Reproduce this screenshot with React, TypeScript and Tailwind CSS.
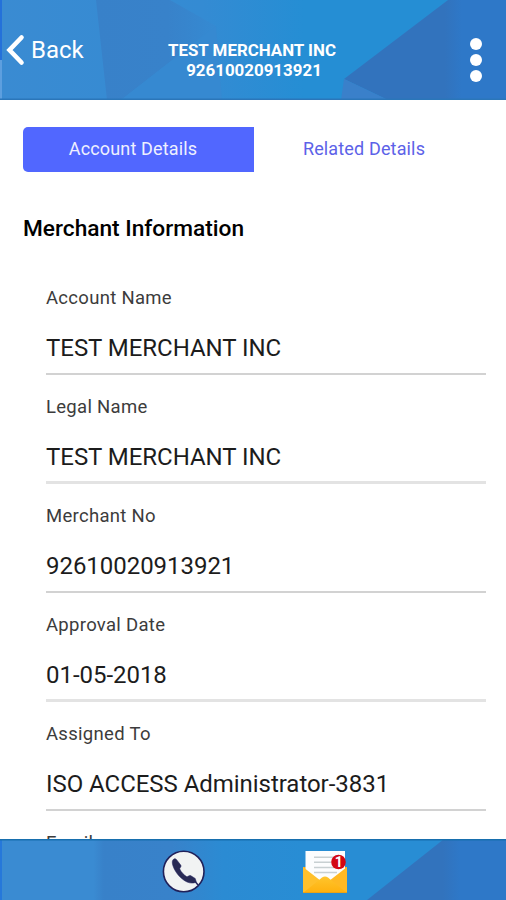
import { useState } from "react";
import { clsx } from "clsx";

type Tab = "account" | "related";

const fields = [
  { label: "Account Name",  value: "TEST MERCHANT INC" },
  { label: "Legal Name",    value: "TEST MERCHANT INC" },
  { label: "Merchant No",   value: "92610020913921" },
  { label: "Approval Date", value: "01-05-2018" },
  { label: "Assigned To",   value: "ISO ACCESS Administrator-3831" },
  { label: "Email",         value: "" },
];

function HeaderArt() {
  return (
    <svg className="absolute inset-0 h-full w-full" viewBox="0 0 506 100" preserveAspectRatio="none">
      <defs>
        <linearGradient id="headBase" x1="0" x2="1">
          <stop offset="0" stopColor="#3a8bd2" />
          <stop offset="0.4" stopColor="#348bd3" />
          <stop offset="0.6" stopColor="#258ed4" />
        </linearGradient>
        <linearGradient id="headFold" x1="0" x2="1">
          <stop offset="0" stopColor="#3881c9" />
          <stop offset="0.6" stopColor="#3882ca" />
          <stop offset="1" stopColor="#358ad2" />
        </linearGradient>
        <linearGradient id="headDark" gradientUnits="userSpaceOnUse" x1="445" x2="462" y1="0" y2="0">
          <stop offset="0" stopColor="#3273bd" />
          <stop offset="1" stopColor="#2e78c8" />
        </linearGradient>
      </defs>
      <rect width="506" height="100" fill="url(#headBase)" />
      <path d="M96 0H170L216 26L121 100H107Z" fill="url(#headFold)" />
      <path d="M216 26L222 100H121Z" fill="#3689d1" />
      <path d="M448 0H506V100H388L344 79Z" fill="url(#headDark)" />
      <path d="M344 79L388 100H341Z" fill="#3a80ca" />
      <path d="M0 0H2V60H0Z" fill="#2471da" />
      <path d="M0 60H2V100H0Z" fill="#5d9fdf" />
      <path d="M0 98.500H506V100H0Z" fill="#2b76b9" />
    </svg>
  );
}

function FooterArt() {
  return (
    <svg className="absolute inset-0 h-full w-full" viewBox="0 0 506 61" preserveAspectRatio="none">
      <defs>
        <linearGradient id="footBase" x1="0" x2="1">
          <stop offset="0" stopColor="#3a8bd2" />
          <stop offset="0.185" stopColor="#3a8bd2" />
          <stop offset="0.205" stopColor="#3881c9" />
          <stop offset="0.34" stopColor="#3882ca" />
          <stop offset="0.44" stopColor="#2b8bd3" />
          <stop offset="0.6" stopColor="#288dd4" />
        </linearGradient>
        <linearGradient id="footDark" gradientUnits="userSpaceOnUse" x1="443" x2="460" y1="0" y2="0">
          <stop offset="0" stopColor="#3273bd" />
          <stop offset="1" stopColor="#2e78c8" />
        </linearGradient>
      </defs>
      <rect width="506" height="61" fill="url(#footBase)" />
      <path d="M444 0H506V61H367Z" fill="url(#footDark)" />
      <path d="M0 0H2V61H0Z" fill="#2678da" />
      <path d="M0 0H506V1.500H0Z" fill="#176fae" />
    </svg>
  );
}

function PhoneIcon() {
  return (
    <svg width="44" height="44" viewBox="0 0 44 44">
      <circle cx="21.700" cy="21.500" r="20.300" fill="#f1f3f3" stroke="#20215a" strokeWidth="1.600" />
      <path
        d="M11.800 9C9.900 10.200 9.900 13 11 16C13.300 22.500 18.500 28.800 25 32C28 33.300 31 33.400 33.300 32.500L34.200 31.400L33.200 28.400L28.600 25.600C27.100 24.900 26.500 26.600 24.900 26.800C22 25.200 19 22 17.700 18.800C18.200 17.400 19.500 16.800 18.900 15.300L14.400 9.400C13.600 8.500 12.700 8.500 11.800 9Z"
        fill="#292a55"
        stroke="#20215a"
        strokeWidth="0.500"
      />
      <path d="M33.200 31.500L36 35" stroke="#20215a" strokeWidth="1.400" />
    </svg>
  );
}

function MailIcon() {
  return (
    <svg width="46" height="44" viewBox="0 0 46 44">
      <defs>
        <linearGradient id="flap" x1="0" y1="0" x2="0" y2="1">
          <stop offset="0" stopColor="#ffc52d" />
          <stop offset="1" stopColor="#ffb00d" />
        </linearGradient>
      </defs>
      <path d="M1 17H45V43H1Z" fill="#f6ad22" />
      <path d="M3.500 1H43V32H3.500Z" fill="#fcfdfe" />
      <path d="M12 7.200H31M12 12.300H29M12 17.400H33M12 22.500H35" stroke="#c8d0d2" strokeWidth="1.500" />
      <path d="M1 17L19 31L1 43Z" fill="#ffc02b" />
      <path d="M45 17L27 31L45 43Z" fill="#ffb923" />
      <path d="M1 43L17 30L20 27.500Q23 25.500 26 27.500L29 30L45 43Z" fill="url(#flap)" />
      <path d="M1 42.500H45" stroke="#eba316" strokeWidth="1" />
      <circle cx="36.500" cy="12" r="7.300" fill="#d30713" />
      <text x="36.700" y="17" textAnchor="middle" fontSize="14" fontWeight="700" fill="#fff" fontFamily="Roboto, sans-serif">1</text>
    </svg>
  );
}

export default function App() {
  const [tab, setTab] = useState<Tab>("account");

  return (
    <div className="flex h-[900px] w-[506px] flex-col overflow-hidden bg-white font-['Roboto',sans-serif]">
      <header className="relative h-[100px] shrink-0 overflow-hidden">
        <HeaderArt />
        <div className="relative flex h-full justify-between text-white">
          <button className="flex h-[100px] w-[120px] items-center pl-[6px]">
            <svg width="20" height="32" viewBox="0 0 20 32" fill="none" stroke="#fff" strokeWidth="4.600" strokeLinecap="round">
              <path d="M15.500 3.500L3.500 16L15.500 28.500" />
            </svg>
            <span className="ml-[5px] text-[24px] leading-[30px]">Back</span>
          </button>
          <div className="pt-[40px] text-center text-[16.900px] leading-[20px] font-bold">
            <p>TEST MERCHANT INC</p>
            <p className="pl-[4px]">92610020913921</p>
          </div>
          <button className="flex w-[122px] flex-col items-end gap-[4px] pt-[37.500px] pr-[24px]">
            <span className="size-[12px] rounded-full bg-white" />
            <span className="size-[12px] rounded-full bg-white" />
            <span className="size-[12px] rounded-full bg-white" />
          </button>
        </div>
      </header>

      <main className="min-h-0 flex-1 overflow-hidden pt-[27px]">
        <div className="ml-[23px] flex h-[45px] w-[451px] text-[18px]">
          {(["account", "related"] as Tab[]).map((t) => (
            <button
              key={t}
              onClick={() => setTab(t)}
              className={clsx(
                "pb-[2px] tracking-[0.150px]",
                t === "account" ? "w-[231px] rounded-l-[5px] pr-[11px]" : "w-[220px]",
                tab === t ? "bg-[#5167ff] text-[#eef0ff]" : "text-[#5c62e8]"
              )}
            >
              {t === "account" ? "Account Details" : "Related Details"}
            </button>
          ))}
        </div>

        <h2 className="mt-[42px] ml-[23px] text-[22.700px] leading-[30px] font-medium text-black">
          Merchant Information
        </h2>

        <div className="mt-[22px] mr-[20px] ml-[46px]">
          {fields.map((f, i) => (
            <div
              key={f.label}
              className={clsx(
                "h-[109px] pt-[20px]",
                i % 2 === 0 ? "border-b-2 border-[#d2d2d2]" : "border-b-3 border-[#e3e3e3]"
              )}
            >
              <p className="text-[18.500px] leading-[24px] tracking-[0.300px] text-[#3c3c3c]">{f.label}</p>
              <p className="mt-[23px] text-[24px] leading-[30px] tracking-[-0.040px] text-[#1c1c1c]">{f.value}</p>
            </div>
          ))}
        </div>
      </main>

      <footer className="relative h-[61px] shrink-0">
        <FooterArt />
        <div className="relative flex pt-[11px] pl-[162px]">
          <button><PhoneIcon /></button>
          <button className="ml-[96px]"><MailIcon /></button>
        </div>
      </footer>
    </div>
  );
}
